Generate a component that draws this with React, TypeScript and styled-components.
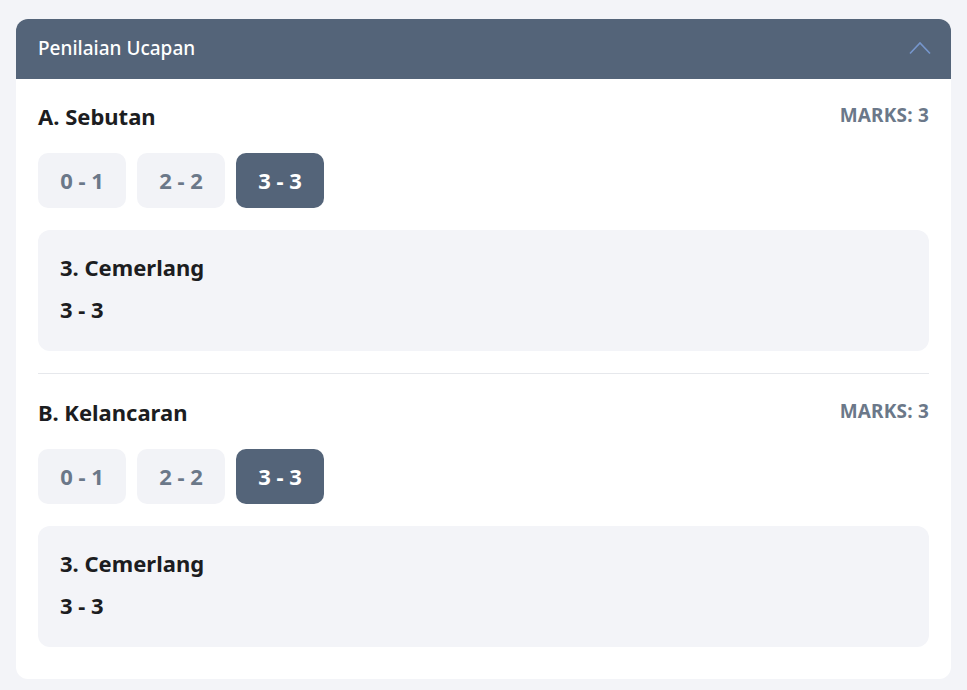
import React from "react";
import styled, { createGlobalStyle } from "styled-components";

const Global = createGlobalStyle`
  html, body { margin: 0; padding: 0; background: #f3f4f8; }
  body { font-family: "Noto Sans", "Open Sans", sans-serif; }
  * { box-sizing: border-box; }
`;

const Page = styled.div`
  padding: 19px 16px 10px 16px;
`;

const Card = styled.div`
  background: #ffffff;
  border-radius: 12px;
  overflow: hidden;
`;

const Header = styled.div`
  height: 60px;
  background: #546479;
  display: flex;
  align-items: center;
  justify-content: space-between;
  padding: 0 20px 2px 22px;
`;

const HeaderTitle = styled.div`
  color: #ffffff;
  font-size: 19px;
  font-weight: 500;
`;

const Body = styled.div`
  padding: 0 22px 10px 22px;
`;

const Section = styled.div<{ $divider?: boolean }>`
  padding: ${(p) => (p.$divider ? "25px" : "24px")} 0 22px 0;
  border-top: ${(p) => (p.$divider ? "1px solid #e6e8ec" : "none")};
  display: flex;
  flex-direction: column;
`;

const TitleRow = styled.div`
  display: flex;
  justify-content: space-between;
  align-items: center;
  height: 28px;
  padding-bottom: 2px;
`;

const SectionTitle = styled.div`
  font-size: 22px;
  font-weight: 700;
  color: #1c1d21;
`;

const Marks = styled.div`
  font-size: 19px;
  font-weight: 700;
  color: #6b7889;
  letter-spacing: 0.2px;
  margin-bottom: 3px;
`;

const Options = styled.div`
  display: flex;
  gap: 11px;
  margin-top: 22px;
`;

const Option = styled.button<{ $active?: boolean }>`
  width: 88px;
  height: 55px;
  border: none;
  border-radius: 10px;
  font-family: inherit;
  font-size: 22px;
  font-weight: 700;
  background: ${(p) => (p.$active ? "#546479" : "#f2f3f7")};
  color: ${(p) => (p.$active ? "#ffffff" : "#6b7889")};
  padding: 0 0 2px 0;
  cursor: pointer;
`;

const Info = styled.div`
  margin-top: 22px;
  background: #f3f4f8;
  border-radius: 12px;
  padding: 22px 22px 27px 22px;
  display: flex;
  flex-direction: column;
  gap: 12px;
`;

const InfoLine = styled.div`
  font-size: 22px;
  font-weight: 700;
  color: #1c1d21;
  line-height: 30px;
`;

const Chevron = () => (
  <svg width="22" height="14" viewBox="0 0 22 14" fill="none">
    <path d="M1 12.5 L11 2 L21 12.5" stroke="#7696cc" strokeWidth="1.6" />
  </svg>
);

const sections = [
  { title: "A. Sebutan", marks: 3 },
  { title: "B. Kelancaran", marks: 3 },
];

const options = ["0 - 1", "2 - 2", "3 - 3"];

export default function App() {
  return (
    <>
      <Global />
      <Page>
        <Card>
          <Header>
            <HeaderTitle>Penilaian Ucapan</HeaderTitle>
            <Chevron />
          </Header>
          <Body>
            {sections.map((s, i) => (
              <Section key={s.title} $divider={i > 0}>
                <TitleRow>
                  <SectionTitle>{s.title}</SectionTitle>
                  <Marks>MARKS: {s.marks}</Marks>
                </TitleRow>
                <Options>
                  {options.map((o) => (
                    <Option key={o} $active={o === "3 - 3"}>
                      {o}
                    </Option>
                  ))}
                </Options>
                <Info>
                  <InfoLine>3. Cemerlang</InfoLine>
                  <InfoLine>3 - 3</InfoLine>
                </Info>
              </Section>
            ))}
          </Body>
        </Card>
      </Page>
    </>
  );
}
